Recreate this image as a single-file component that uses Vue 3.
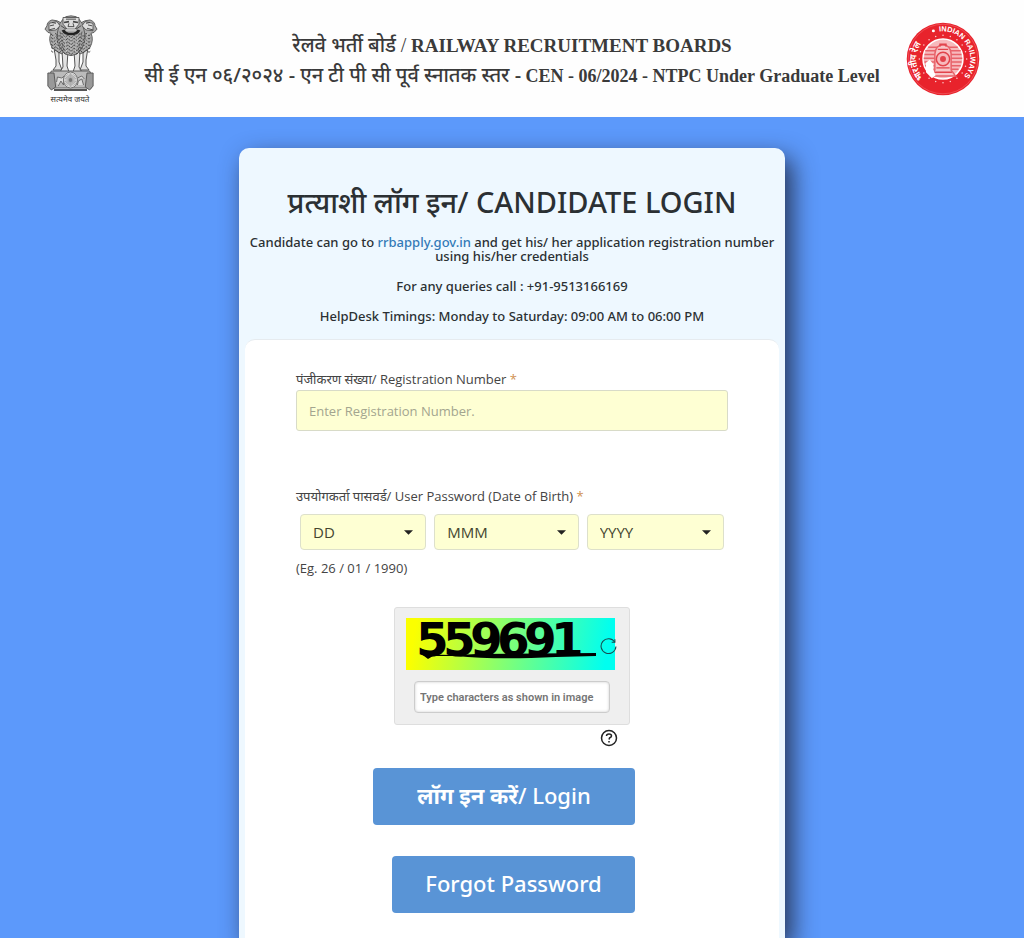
<script setup>
import { ref } from 'vue'

const registration = ref('')
const captcha = ref('')

const digits = '559691'.split('').map((value, index) => ({ value, x: 10 + index * 27 }))

const dateParts = [
  { id: 'day', label: 'Day', text: 'DD' },
  { id: 'month', label: 'Month', text: 'MMM' },
  { id: 'year', label: 'Year', text: 'YYYY' },
]

const stars = Array.from({ length: 20 }, (_, i) => {
  const a = (i / 20) * Math.PI * 2
  return { x: 50 + 32 * Math.cos(a), y: 50 + 32 * Math.sin(a) }
})

const spokes = Array.from({ length: 12 }, (_, i) => i * 15)
const maneRows = [0, 1, 2, 3, 4, 5]
</script>

<template>
  <div class="page">
    <header class="top">
      <svg class="emblem" viewBox="0 0 54 90" role="img" aria-label="State emblem of India">
        <g fill="#e2e2e2" stroke="#555">
          <path d="M10 33 15 34 15 47 18 55H9L12 51 12 45Z" />
          <path d="M18 36H24L23 51 25 57H16L19 52Z" />
          <path d="M30 36H36L35 52 38 57H29L31 51Z" />
          <path d="M39 34 44 33 42 45 42 51 45 55H36L39 47Z" />
        </g>
        <g transform="scale(1 0.83)">
          <g fill="#aaa" stroke="#555" stroke-width="1" stroke-linejoin="round">
            <path d="M18 10 13 7 8 6Q3 8 3 13L1 17 4 21 7 22Q4 30 8 39L13 44 18 47 22 39Z" />
            <path d="M36 10 41 7 46 6Q51 8 51 13L53 17 50 21 47 22Q50 30 46 39L41 44 36 47 32 39Z" />
            <path d="M19 5 22 2 27 1 32 2 35 5 38 10 40 18Q43 31 38 40L33 47 27 49 21 47 16 40Q11 31 14 18L16 10Z" />
          </g>
          <g fill="#ddd" stroke="#555">
            <path d="M5 10 13 8 16 13 12 18 5 19Z" />
            <path d="M49 10 41 8 38 13 42 18 49 19Z" />
            <path d="M19 3H35V11L31 17H23L19 11Z" />
          </g>
          <g fill="none" stroke="#444">
            <path d="M20 9 25 8M29 8 34 9" stroke-width="2" />
            <path d="M25 10 24 14H30L29 10M17 13 22 17M37 13 32 17M22 5H32" />
            <path d="M19 18Q21 23 27 23T35 18" stroke="#222" stroke-width="3" />
            <path d="M22 18H32" stroke="#ccc" stroke-width="2" />
            <path d="M6 13 10 12M5 18 11 16M48 13 44 12M49 18 43 16M8 9 12 10M46 9 42 10" />
            <path
              v-for="row in maneRows"
              :key="row"
              :transform="`translate(0 ${row * 4})`"
              d="M7 23 9 25 12 22 15 26 18 22 21 27 24 24 27 28 30 24 33 27 36 22 39 26 42 22 45 25 47 23"
              stroke-dasharray="3 1"
            />
            <path d="M10 22 15 42M44 22 39 42M20 26 23 46M34 26 31 46M27 28V47" stroke="#ccc" stroke-dasharray="2 2" />
            <path d="M13 24 18 43M41 24 36 43M16 20 20 44M38 20 34 44" stroke="#555" stroke-dasharray="3 2" />
          </g>
        </g>
        <g transform="translate(3 -5) scale(0.87 1)">
          <path d="M5 61H49L51 65V78H3V65Z" fill="#bbb" stroke="#555" />
          <path d="M1 63H8L10 77 5 80 1 76ZM53 63H46L44 77 49 80 53 76Z" fill="#999" stroke="#555" />
          <path d="M11 72 12 67 17 68 20 66 19 75 16 71 13 76M42 75 40 69 36 71 35 75M35 68 40 66 43 69" fill="#ddd" stroke="#666" />
          <circle cx="27" cy="70" r="8" fill="#eee" stroke="#666" />
          <g stroke="#aaa">
            <path v-for="s in spokes" :key="s" d="M20 70H34" :transform="`rotate(${s} 27 70)`" />
          </g>
          <circle cx="27" cy="70" r="2" fill="#777" />
          <path d="M8 80H46" stroke="#555" stroke-width="2" />
        </g>
        <text x="26" y="87" text-anchor="middle" font-size="8" fill="#333">सत्यमेव जयते</text>
      </svg>

      <h1 class="heading">
        <span class="line"><span class="hindi">रेलवे भर्ती बोर्ड</span> <span class="slash">/</span> RAILWAY RECRUITMENT BOARDS</span>
        <span class="line notice"><span class="hindi">सी ई एन ०६/२०२४ - एन टी पी सी पूर्व स्नातक स्तर -</span> CEN - 06/2024 - NTPC Under Graduate Level</span>
      </h1>

      <svg class="seal" viewBox="0 0 100 100" role="img" aria-label="Indian Railways">
        <circle cx="50" cy="50" r="49" fill="#e8232c" />
        <circle cx="50" cy="50" r="47" fill="none" stroke="#f15a60" stroke-width="1" />
        <path id="seal-left" d="M23 75A37 37 0 0 1 44 14" fill="none" />
        <path id="seal-right" d="M45 13A37 37 0 0 1 66 83" fill="none" />
        <g fill="#fff" font-weight="700">
          <text font-size="12"><textPath href="#seal-left">भारतीय रेल</textPath></text>
          <text font-size="10"><textPath href="#seal-right">INDIAN RAILWAYS</textPath></text>
        </g>
        <circle cx="37" cy="12" r="2" fill="#fff" />
        <circle v-for="(s, i) in stars" :key="i" :cx="s.x" :cy="s.y" r="1" fill="#fbd0d2" />
        <circle cx="50" cy="50" r="27" fill="#f7b9bc" stroke="#fff" stroke-width="2" />
        <path d="M30 34H70M26 39H74M25 44H75M24 49H76M25 54H75M26 59H74M29 64H71" stroke="#e8636a" stroke-width="2" />
        <path d="M39 65V43Q40 31 50 31T61 43V65L67 73H33Z" fill="#f8c5c7" stroke="#e8636a" stroke-width="2" />
        <circle cx="50" cy="50" r="9" fill="#f7b9bc" stroke="#e2434b" stroke-width="2" />
        <circle cx="50" cy="50" r="4" fill="#e2434b" />
        <path d="M43 37H57M41 62H59M38 68H62M46 33V30H54V33" fill="none" stroke="#e2434b" stroke-width="2" />
        <path d="M27 55 32 51 37 57V65L40 72 35 76 27 68Z" fill="#fff" />
      </svg>
    </header>

    <main class="stage">
      <section class="card">
        <div class="intro">
          <h2>प्रत्याशी लॉग इन/ CANDIDATE LOGIN</h2>
          <p>
            Candidate can go to <a href="#">rrbapply.gov.in</a> and get his/ her application registration number
            using his/her credentials
          </p>
          <p>For any queries call : +91-9513166169</p>
          <p>HelpDesk Timings: Monday to Saturday: 09:00 AM to 06:00 PM</p>
        </div>

        <form class="panel" @submit.prevent>
          <div class="field">
            <label for="registration">पंजीकरण संख्या/ Registration Number <span class="star">*</span></label>
            <input id="registration" v-model="registration" type="text" placeholder="Enter Registration Number." />
          </div>

          <fieldset class="birth">
            <legend>उपयोगकर्ता पासवर्ड/ User Password (Date of Birth) <span class="star">*</span></legend>
            <div class="dates">
              <div v-for="part in dateParts" :key="part.id" class="pick" :class="part.id">
                <select :id="part.id" :aria-label="part.label">
                  <option>{{ part.text }}</option>
                </select>
                <svg class="caret" viewBox="0 0 8 4" aria-hidden="true"><path d="M0 0H8L4 4Z" fill="#222" /></svg>
              </div>
            </div>
            <p class="hint">(Eg. 26 / 01 / 1990)</p>
          </fieldset>

          <div class="verify">
            <div class="captcha">
              <div class="picture">
                <svg class="code" viewBox="0 0 209 52" role="img" aria-label="Captcha">
                  <g font-size="47" font-weight="700">
                    <text v-for="(d, i) in digits" :key="i" :x="d.x" y="38">{{ d.value }}</text>
                  </g>
                  <path d="M14 35 23 36Q45 38 70 36L190 35V38L150 39Q90 42 50 38L27 38 22 41Z" />
                </svg>
                <button class="refresh" type="button" aria-label="Refresh captcha">
                  <svg viewBox="0 0 16 16" fill="none" stroke="#174b50" stroke-width="1">
                    <path d="M14 5A7 7 0 1 0 15 9" />
                    <path d="M11 5H14V2" />
                  </svg>
                </button>
              </div>
              <input v-model="captcha" type="text" aria-label="Captcha characters" placeholder="Type characters as shown in image" />
            </div>
            <button class="help" type="button" aria-label="Help">
              <svg viewBox="0 0 18 18" fill="none" stroke="#222" stroke-width="1.5">
                <circle cx="9" cy="9" r="7.5" />
                <path d="M6.5 7Q6.5 5 9 5T11.5 7Q11.5 8 9.5 9L9 10.5" />
                <path d="M9 12V13.5" />
              </svg>
            </button>
          </div>

          <div class="actions">
            <button class="login" type="submit"><b>लॉग इन करें</b>/ Login</button>
            <button class="forgot" type="button">Forgot Password</button>
          </div>
        </form>
      </section>
    </main>
  </div>
</template>

<style>
body {
  margin: 0;
}
</style>

<style scoped>
* {
  box-sizing: border-box;
}

.page {
  display: flex;
  flex-direction: column;
  min-height: 100vh;
  background: #5c99fb;
  color: #444;
  font-family: 'Open Sans', 'Noto Sans', sans-serif;
  font-size: 13px;
}

.top {
  display: grid;
  grid-template-columns: 74px 1fr 74px;
  align-items: start;
  height: 117px;
  padding: 15px 44px 0;
  background: #fefefe;
}

.emblem {
  width: 54px;
  height: 90px;
}

.seal {
  width: 74px;
  height: 74px;
  margin-top: 7px;
  font-family: 'Liberation Sans', sans-serif;
}

.heading {
  display: flex;
  flex-direction: column;
  margin: 15px 0 0;
  color: #3a3a3a;
  font-family: 'Liberation Serif', serif;
  font-size: 19px;
  font-weight: 700;
  line-height: 30px;
  text-align: center;
}

.line {
  height: 30px;
}

.notice {
  font-size: 18px;
}

.hindi {
  font-family: 'Noto Sans', sans-serif;
  font-size: 20px;
  font-weight: 500;
}

.slash {
  font-size: 20px;
  font-weight: 400;
}

.stage {
  display: flex;
  flex: 1;
  justify-content: center;
  padding-top: 31px;
}

.card {
  display: flex;
  flex-direction: column;
  width: 100%;
  max-width: 546px;
  padding: 0 6px;
  border-radius: 10px 10px 0 0;
  background: #eef8ff;
  box-shadow: 7px 10px 24px rgba(30, 35, 55, 0.85);
}

.intro {
  padding-top: 34px;
  color: #2b3033;
  font-family: 'Noto Sans', sans-serif;
  font-weight: 500;
  text-align: center;
}

.intro h2 {
  margin: 0 0 13px;
  font-size: 29px;
  font-weight: 500;
  line-height: 40px;
}

.intro p {
  margin: 0 0 16px;
  line-height: 14px;
}

.intro a {
  color: #337ab7;
  text-decoration: none;
}

.panel {
  flex: 1;
  padding: 30px 51px 25px;
  border-top: 1px solid #e6ebef;
  border-radius: 10px 10px 0 0;
  background: #fff;
}

.field label,
.birth legend {
  display: block;
  padding: 0;
  line-height: 18px;
}

.star {
  color: #d09050;
}

.field input {
  display: block;
  width: 100%;
  height: 41px;
  margin-top: 2px;
  padding: 0 12px;
  border: 1px solid #d8dbc8;
  border-radius: 3px;
  background: #feffd3;
  color: #444;
  font: inherit;
}

.field input::placeholder {
  color: #a3a58f;
  opacity: 1;
}

.birth {
  min-width: 0;
  margin: 56px 0 0;
  padding: 0;
  border: 0;
}

.dates {
  display: flex;
  gap: 8px;
  padding: 9px 4px 0;
}

.pick {
  position: relative;
}

.day {
  flex: 126;
}

.month {
  flex: 144;
}

.year {
  flex: 137;
}

.pick select {
  width: 100%;
  height: 36px;
  padding: 0 12px;
  appearance: none;
  border: 1px solid #dde0cb;
  border-radius: 4px;
  background: #feffd3;
  color: #44452f;
  font-family: inherit;
  font-size: 15px;
}

.caret {
  position: absolute;
  top: 16px;
  right: 13px;
  width: 9px;
  height: 5px;
  pointer-events: none;
}

.hint {
  margin: 8px 0 0;
  line-height: 20px;
}

.verify {
  width: 236px;
  margin: 29px auto 0;
}

.captcha {
  padding: 10px 14px 11px 11px;
  border: 1px solid #dedede;
  border-radius: 3px;
  background: #efefef;
}

.picture {
  position: relative;
  height: 52px;
  background: linear-gradient(100deg, #fbff00 5%, #00fff0 95%);
}

.code {
  display: block;
  width: 100%;
  height: 52px;
  overflow: visible;
  font-family: 'DejaVu Sans', sans-serif;
}

.refresh {
  position: absolute;
  top: 19px;
  right: -2px;
  width: 17px;
  height: 17px;
  padding: 0;
  border: 0;
  background: none;
}

.refresh svg,
.help svg {
  display: block;
  width: 100%;
}

.captcha input {
  display: block;
  width: 196px;
  height: 32px;
  margin: 11px 0 0 8px;
  padding: 0 5px;
  border: 1px solid #ccc;
  border-radius: 4px;
  background: #fff;
  box-shadow: inset 0 0 3px #ccc;
  color: #444;
  font-family: Roboto, sans-serif;
  font-size: 11px;
  font-weight: 600;
}

.captcha input::placeholder {
  color: #757575;
  opacity: 1;
}

.help {
  display: block;
  width: 18px;
  height: 18px;
  margin: 4px 12px 0 auto;
  padding: 0;
  border: 0;
  background: none;
}

.actions {
  display: flex;
  flex-direction: column;
  align-items: flex-end;
  gap: 31px;
  margin: 21px 93px 0 0;
}

.actions button {
  height: 57px;
  padding: 0 0 3px;
  border: 0;
  border-radius: 4px;
  background: #5994d6;
  color: #fff;
  font-family: 'Noto Sans', sans-serif;
  font-size: 22px;
  font-weight: 500;
}

.actions .login {
  width: 262px;
}

.actions .forgot {
  width: 243px;
}
</style>
